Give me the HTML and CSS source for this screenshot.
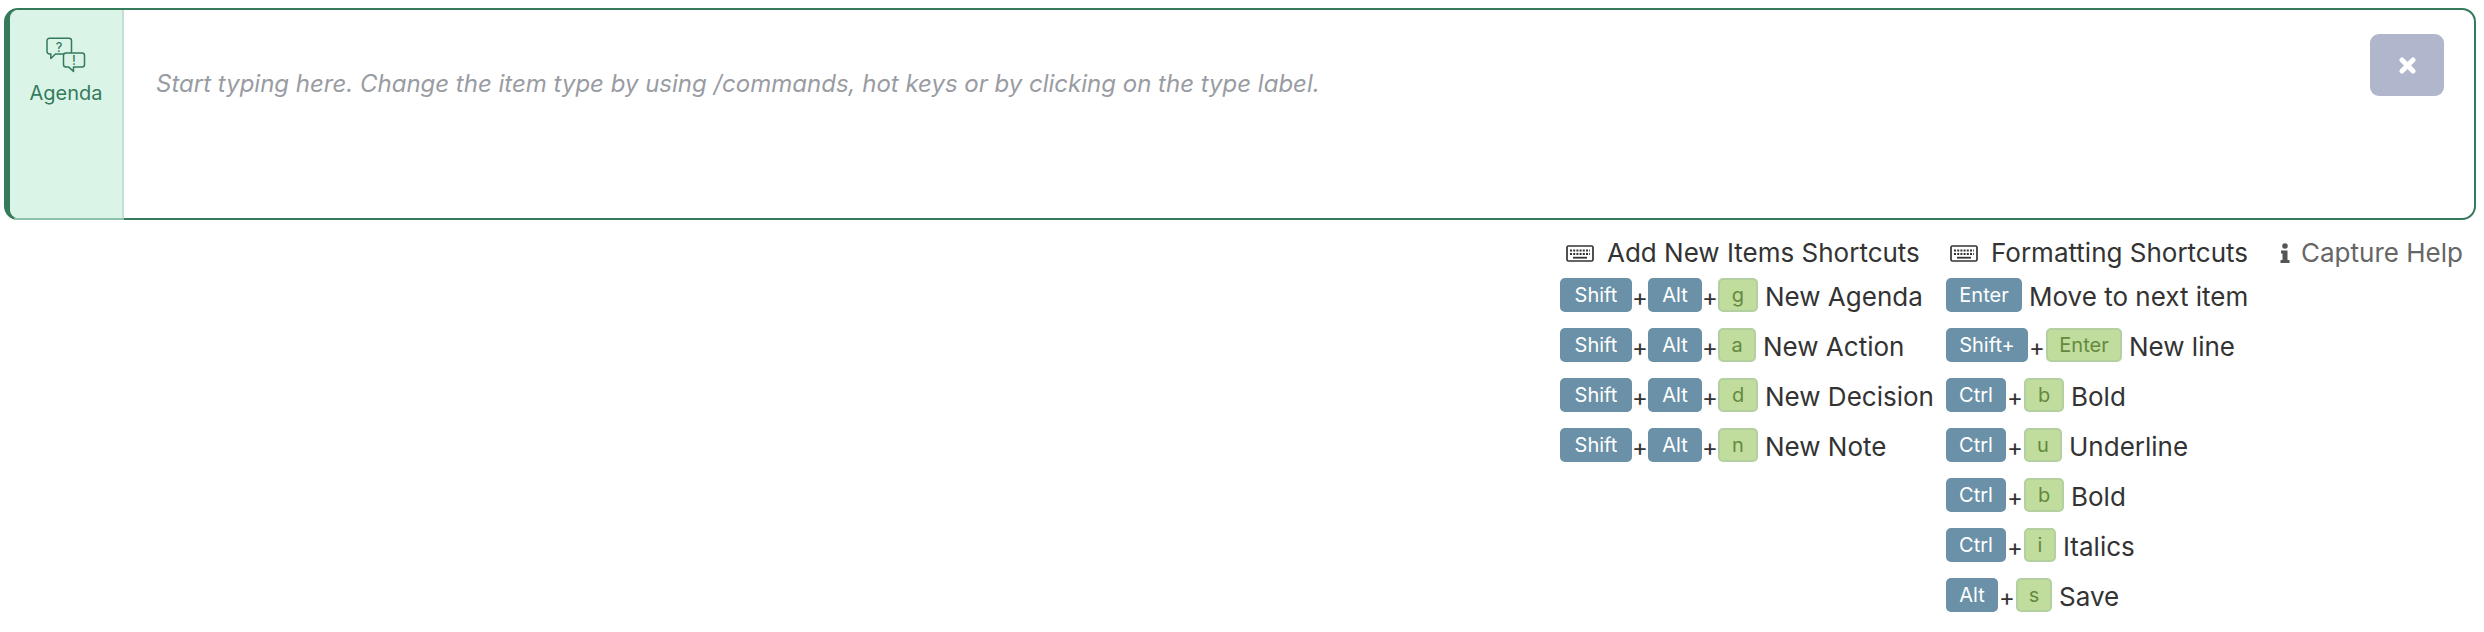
FILE: index.html
```html
<!DOCTYPE html>
<html lang="en">
<head>
    <meta charset="UTF-8">
    <title>Capture</title>
    <link rel="stylesheet" href="styles.css">
</head>
<body>
<div class="capture">
    <div class="type">
        <svg class="type-icon" width="40" height="36" viewBox="0 0 40 36" fill="none" stroke="#357a5b" stroke-width="1.5" stroke-linejoin="round">
            <path d="M3.500 1.200h19.500a2.500 2.500 0 0 1 2.500 2.500v10.800a2.500 2.500 0 0 1-2.500 2.500H9.500L4.800 21.500V17H3.500A2.500 2.500 0 0 1 1 14.500V3.700a2.500 2.500 0 0 1 2.500-2.500z"/>
            <path d="M20 15.900h16a2.500 2.500 0 0 1 2.500 2.500v9a2.500 2.500 0 0 1-2.500 2.500h-8.500v4.500L22.500 29.900H20a2.500 2.500 0 0 1-2.500-2.500v-9a2.500 2.500 0 0 1 2.500-2.500z" fill="#daf5e8"/>
            <text x="13" y="14.500" class="icon-mark">?</text>
            <text x="28" y="28" class="icon-mark">!</text>
        </svg>
        <span class="type-label">Agenda</span>
    </div>
    <div class="entry">Start typing here. Change the item type by using /commands, hot keys or by clicking on the type label.</div>
    <button class="close">
        <svg width="17" height="17" viewBox="0 0 17 17"><path d="M3 3l11 11M14 3L3 14" stroke="#fff" stroke-width="5" stroke-linecap="round"/></svg>
    </button>
</div>

<div class="help">
    <div class="col col-items">
        <h3><svg class="kb" width="28" height="17" viewBox="0 0 28 17"><rect x="1" y="1" width="26" height="15" rx="1.500" fill="none" stroke="#333" stroke-width="1.700"/><path d="M4 5.500h20M4 9h20" stroke="#333" stroke-width="1.800" stroke-dasharray="2 1.200"/><path d="M7 12.700h14" stroke="#333" stroke-width="1.800"/></svg>Add New Items Shortcuts</h3>
        <div class="row"><kbd class="k w-shift">Shift</kbd><i>+</i><kbd class="k alt w-alt">Alt</kbd><i>+</i><kbd class="k g w-40">g</kbd><span class="lbl">New Agenda</span></div>
        <div class="row"><kbd class="k w-shift">Shift</kbd><i>+</i><kbd class="k alt w-alt">Alt</kbd><i>+</i><kbd class="k g w-38">a</kbd><span class="lbl">New Action</span></div>
        <div class="row"><kbd class="k w-shift">Shift</kbd><i>+</i><kbd class="k alt w-alt">Alt</kbd><i>+</i><kbd class="k g w-40">d</kbd><span class="lbl">New Decision</span></div>
        <div class="row"><kbd class="k w-shift">Shift</kbd><i>+</i><kbd class="k alt w-alt">Alt</kbd><i>+</i><kbd class="k g w-40">n</kbd><span class="lbl">New Note</span></div>
    </div>
    <div class="col col-format">
        <h3 class="format-title"><svg class="kb" width="28" height="17" viewBox="0 0 28 17"><rect x="1" y="1" width="26" height="15" rx="1.500" fill="none" stroke="#333" stroke-width="1.700"/><path d="M4 5.500h20M4 9h20" stroke="#333" stroke-width="1.800" stroke-dasharray="2 1.200"/><path d="M7 12.700h14" stroke="#333" stroke-width="1.800"/></svg>Formatting Shortcuts</h3>
        <div class="row"><kbd class="k w-enter">Enter</kbd><span class="lbl">Move to next item</span></div>
        <div class="row"><kbd class="k w-shiftp">Shift+</kbd><i>+</i><kbd class="k g w-enter">Enter</kbd><span class="lbl">New line</span></div>
        <div class="row"><kbd class="k w-ctrl">Ctrl</kbd><i>+</i><kbd class="k g w-40">b</kbd><span class="lbl">Bold</span></div>
        <div class="row"><kbd class="k w-ctrl">Ctrl</kbd><i>+</i><kbd class="k g w-38">u</kbd><span class="lbl">Underline</span></div>
        <div class="row"><kbd class="k w-ctrl">Ctrl</kbd><i>+</i><kbd class="k g w-40">b</kbd><span class="lbl">Bold</span></div>
        <div class="row"><kbd class="k w-ctrl">Ctrl</kbd><i>+</i><kbd class="k g w-32">i</kbd><span class="lbl">Italics</span></div>
        <div class="row"><kbd class="k w-alts">Alt</kbd><i>+</i><kbd class="k g w-36">s</kbd><span class="lbl">Save</span></div>
    </div>
    <div class="col col-help">
        <h3 class="capture-help"><svg class="info" width="10" height="20" viewBox="0 0 10 20"><circle cx="5" cy="3" r="2.800" fill="#555"/><path d="M1 7.500h6.500v9.500H9.500V20H.5v-3h2v-6.500H1z" fill="#555"/></svg>Capture Help</h3>
    </div>
</div>
</body>
</html>
```
FILE: styles.css
```css
html, body {
    margin: 0;
    padding: 0;
}
body {
    background: #fff;
    font-family: Inter, "Liberation Sans", sans-serif;
    color: #333;
    height: 632px;
    overflow: hidden;
}
.capture {
    display: flex;
    height: 208px;
    margin: 8px 8px 0 4px;
    border: 2px solid #357a5b;
    border-left: 6px solid #357a5b;
    border-radius: 14px;
    position: relative;
}
.type {
    position: relative;
    width: 112px;
    flex: none;
    background: #daf5e8;
    border-right: 2px solid #c2ded6;
    border-radius: 8px 0 0 8px;
    display: flex;
    flex-direction: column;
    align-items: center;
    padding-top: 27px;
    box-sizing: content-box;
    height: 181px;
}
/* lighter stretch of the bottom border under the type pane */
.type::after {
    content: "";
    position: absolute;
    left: 4px;
    right: -2px;
    bottom: -2px;
    height: 2px;
    background: #8fc0a8;
}
.type-icon {
    display: block;
}
.icon-mark {
    font-family: Inter, sans-serif;
    font-size: 12.500px;
    font-weight: 500;
    fill: #357a5b;
    stroke: none;
    text-anchor: middle;
}
.type-label {
    margin-top: 8px;
    font-size: 20px;
    line-height: 24px;
    color: #357a5b;
}
.entry {
    flex: 1;
    padding: 59px 0 0 32px;
    font-size: 24px;
    line-height: 30px;
    font-style: italic;
    color: #999ca3;
}
.close {
    width: 74px;
    height: 62px;
    margin: 24px 30px 0 0;
    flex: none;
    border: none;
    border-radius: 9px;
    background: #b0b6cb;
    display: flex;
    align-items: center;
    justify-content: center;
    padding: 0;
}
.help {
    display: flex;
    margin-top: 16px;
    padding-left: 1560px;
}
.col {
    display: flex;
    flex-direction: column;
    gap: 16px;
}
.col-items {
    width: 386px;
}
.col-format {
    width: 334px;
}
h3 {
    margin: 0 0 -8px;
    height: 34px;
    display: flex;
    align-items: center;
    font-size: 26px;
    font-weight: 400;
    line-height: 34px;
    color: #333;
    white-space: nowrap;
}
.kb {
    margin: 0 13px 0 6px;
    flex: none;
}
.format-title .kb {
    margin-left: 4px;
}
.capture-help {
    color: #666;
}
.info {
    margin-right: 11px;
}
.row {
    display: flex;
    align-items: center;
    height: 34px;
    white-space: nowrap;
}
.k {
    height: 34px;
    box-sizing: border-box;
    display: flex;
    align-items: center;
    justify-content: center;
    background: #6a91a7;
    color: #fff;
    border-radius: 5px;
    font-family: Inter, sans-serif;
    font-size: 20px;
}
.k.g {
    background: #c1dd9d;
    border: 2px solid #b4cfa0;
    color: #64893f;
}
.row i {
    font-style: normal;
    font-size: 24px;
    width: 18px;
    text-align: center;
    margin-top: 4px;
}
.col-items .row i {
    width: 16px;
}
.lbl {
    font-size: 26px;
    margin: 2px 0 0 7px;
}
.w-shift { width: 72px; }
.w-alt { width: 54px; }
.w-40 { width: 40px; }
.w-38 { width: 38px; }
.w-36 { width: 36px; }
.w-32 { width: 32px; }
.w-enter { width: 76px; }
.w-shiftp { width: 82px; }
.w-ctrl { width: 60px; }
.w-alts { width: 52px; }
```
